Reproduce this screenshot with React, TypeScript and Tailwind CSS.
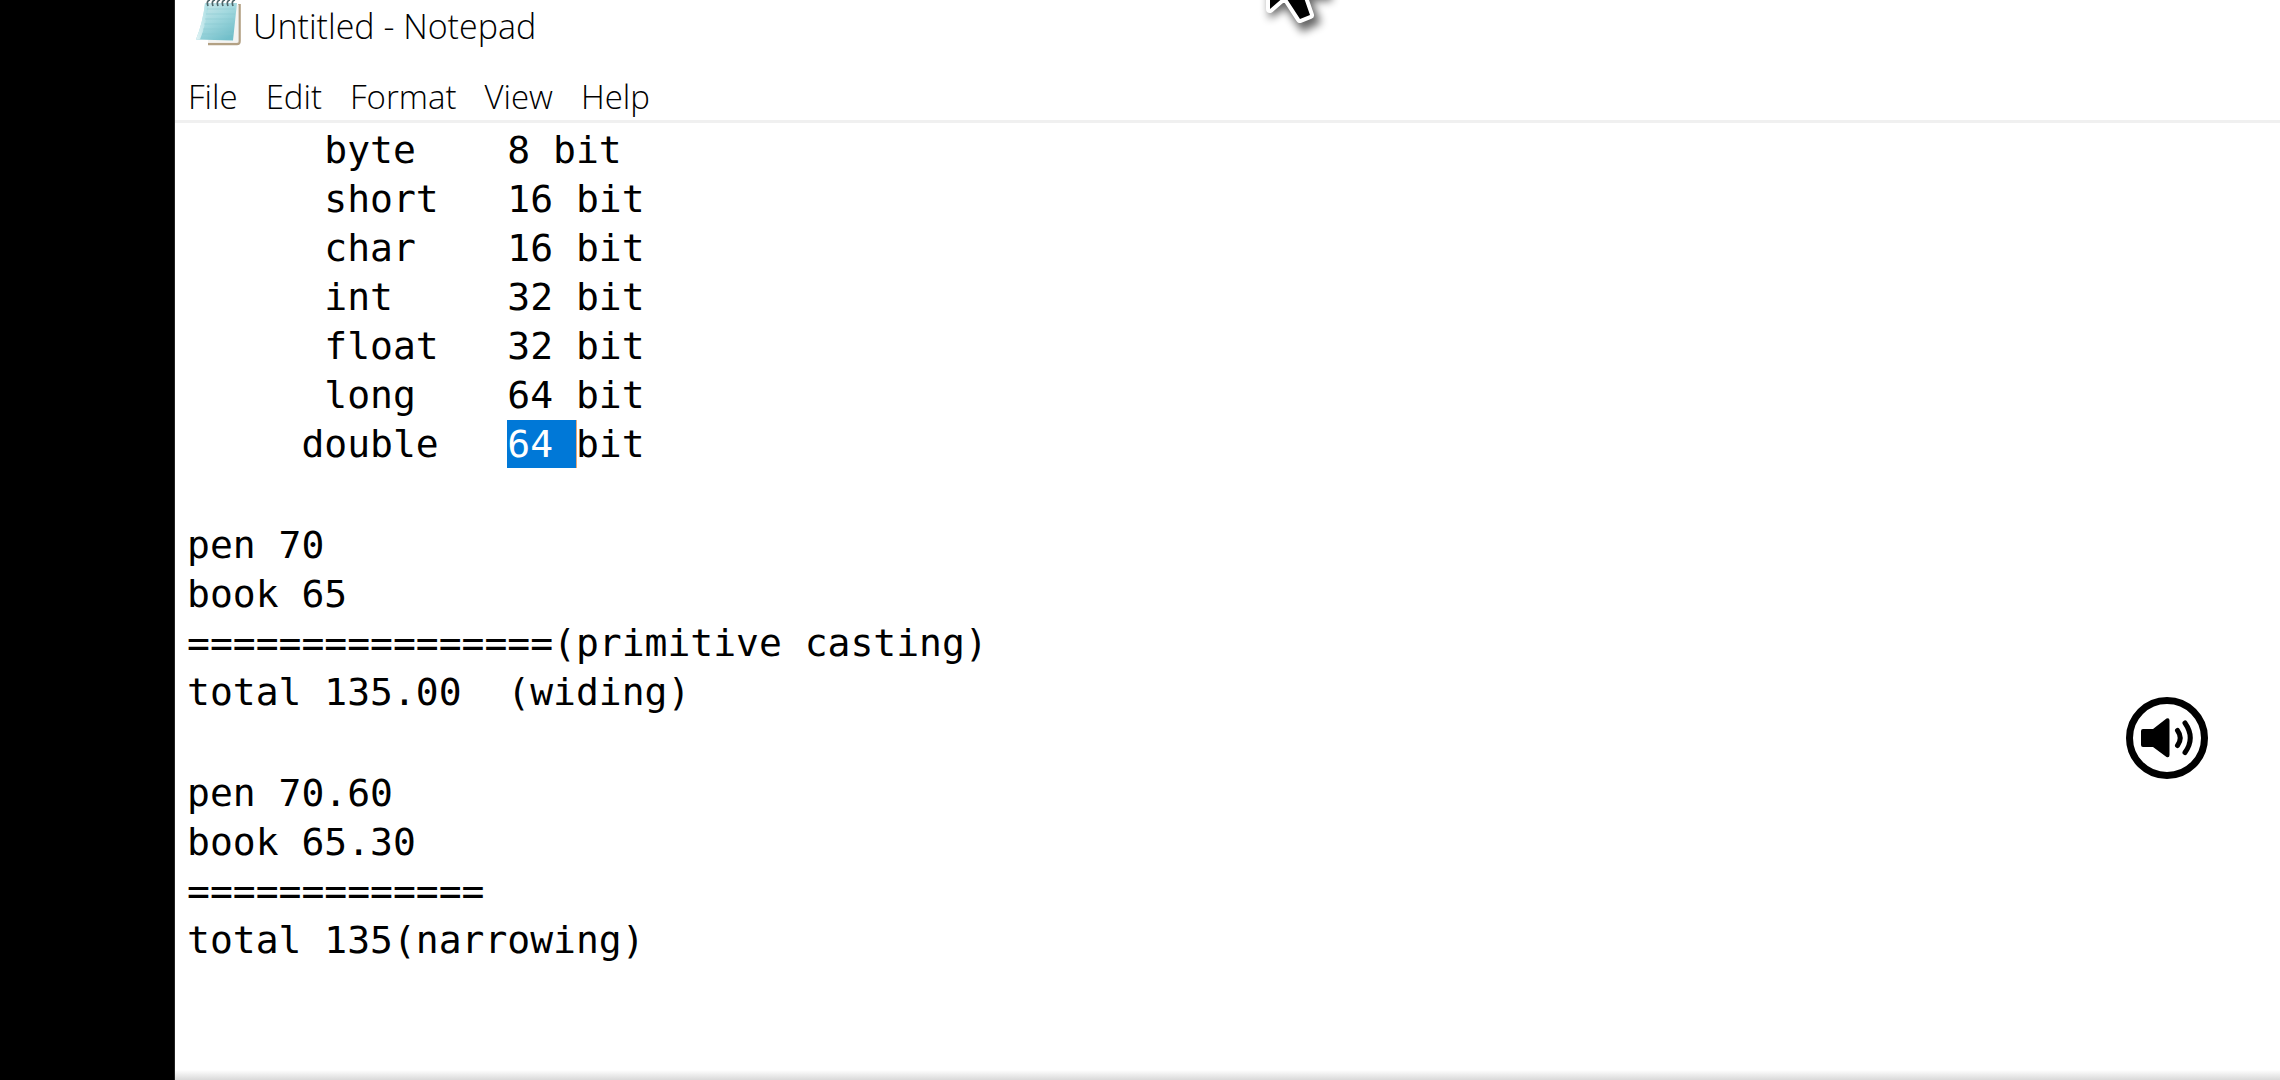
const menus = ["File", "Edit", "Format", "View", "Help"];

function NotepadIcon() {
  return (
    <svg viewBox="0 0 46 46" className="h-[46px] w-[46px] shrink-0" aria-hidden="true">
      <defs>
        <linearGradient id="page" x1="0" y1="0" x2="0.7" y2="1">
          <stop offset="0" stopColor="#d3eaec" />
          <stop offset="0.5" stopColor="#a3d9df" />
          <stop offset="1" stopColor="#72bfca" />
        </linearGradient>
        <linearGradient id="edge" x1="0" y1="0" x2="1" y2="0">
          <stop offset="0" stopColor="#e4f5f6" />
          <stop offset="1" stopColor="#a5dbe1" />
        </linearGradient>
      </defs>
      <path d="M13 44 H42 Q44.500 44 44.500 41 V4" fill="none" stroke="#b3a184" strokeWidth="2.6" />
      <path d="M13 40 L42 5 H43.500 V42.500 H13 Z" fill="#f3f4f2" />
      <path d="M10 3 H42 L38 40.500 L1 39.500 Q8 22 10 3 Z" fill="url(#page)" />
      <path d="M1 39.500 Q8 22 10 3 H14 Q11 25 5 39.500 Z" fill="url(#edge)" />
      <path d="M12 9 H40 M11 14 H40 M10 19 H39 M9 24 H39 M8 29 H38 M7 34 H38" stroke="#86c6ce" strokeWidth="1" opacity="0.5" />
      <path d="M13 6 Q11 1 15 0 M18 6 Q16 1 20 0 M23 6 Q21 1 25 0 M28 6 Q26 1 30 0 M33 6 Q31 1 35 0 M38 6 Q36 1 40 0" fill="none" stroke="#4f666b" strokeWidth="1.7" />
    </svg>
  );
}

function Pointer() {
  return (
    <svg viewBox="0 0 100 50" className="pointer-events-none absolute top-0 left-[1240px] h-[50px] w-[100px]" aria-hidden="true">
      <defs>
        <filter id="soft" x="-30%" y="-100%" width="160%" height="300%">
          <feGaussianBlur stdDeviation="4" />
        </filter>
      </defs>
      <path d="M27 -20 V16 L44 5 L60 29 L79 20 L70 -2 H90 V-20 Z" transform="translate(2 3)" fill="#000" opacity="0.6" filter="url(#soft)" />
      <path d="M30 -30 V9 L45 -4 L60 19 L70 15 L62 -8 H82 Z" fill="#000" stroke="#fff" strokeWidth="8" strokeLinejoin="round" paintOrder="stroke" />
    </svg>
  );
}

function SpeakerButton() {
  return (
    <button type="button" aria-label="Volume" className="absolute top-[697px] right-[72px] h-[82px] w-[82px]">
      <svg viewBox="0 0 82 82" className="h-full w-full" aria-hidden="true">
        <circle cx="41" cy="41" r="37.500" fill="#fff" stroke="#000" strokeWidth="7" />
        <path d="M17 32 H27 L40.500 21.500 Q43.500 20.500 43.500 23.500 V58 Q43.500 61 40.500 60 L27 50 H17 Q15 50 15 48 V34 Q15 32 17 32 Z" fill="#000" />
        <path d="M51.500 33.500 Q57 41 51.500 48.500 M59 26 Q69.500 41 59 55.500" fill="none" stroke="#000" strokeWidth="5" strokeLinecap="round" />
      </svg>
    </button>
  );
}

export default function App() {
  return (
    <div className="relative flex min-h-screen overflow-hidden bg-black text-black">
      <div className="w-[175px] shrink-0 border-r border-[#222]" />
      <main className="flex min-w-0 flex-1 flex-col bg-white">
        <header className="flex h-[68px] items-start gap-3 pl-5">
          <NotepadIcon />
          <h1 className="font-['Open_Sans',sans-serif] text-[34px] leading-[52px] font-light whitespace-pre">Untitled - Notepad</h1>
        </header>
        <nav className="flex h-[55px] items-end gap-7 border-b-3 border-[#f0f0f0] pl-[13px]">
          {menus.map((m) => (
            <button key={m} type="button" className="font-['Open_Sans',sans-serif] text-[33px] leading-[46px] font-light">
              {m}
            </button>
          ))}
        </nav>
        <article className="flex flex-1 flex-col gap-[52px] pt-[3px] pl-3 text-[38px] leading-[49px]">
          <pre className="font-['DejaVu_Sans_Mono',monospace]">
            {"      byte    8 bit\n      short   16 bit\n      char    16 bit\n      int     32 bit\n      float   32 bit\n      long    64 bit\n     double   "}
            <mark className="bg-[#0078d7] py-[2px] text-white shadow-[1px_0_0_#e8a878]">{"64 "}</mark>
            {"bit"}
          </pre>
          <pre className="font-['DejaVu_Sans_Mono',monospace]">{"pen 70\nbook 65\n================(primitive casting)\ntotal 135.00  (widing)"}</pre>
          <pre className="font-['DejaVu_Sans_Mono',monospace]">{"pen 70.60\nbook 65.30\n=============\ntotal 135(narrowing)"}</pre>
        </article>
        <footer className="h-[10px] bg-linear-to-b from-white to-[#d9d9d9]" />
      </main>
      <Pointer />
      <SpeakerButton />
    </div>
  );
}
